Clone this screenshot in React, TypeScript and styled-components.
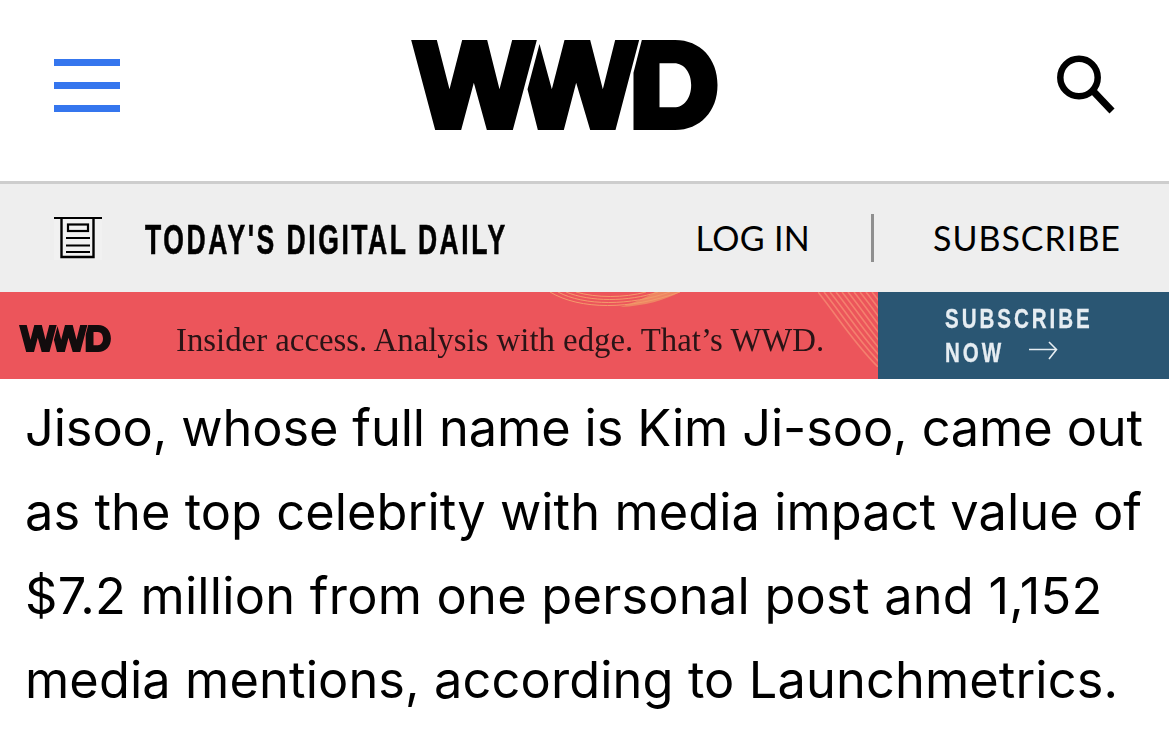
import React from 'react'
import styled, { createGlobalStyle } from 'styled-components'

const GlobalStyle = createGlobalStyle`
  html, body {
    margin: 0;
    padding: 0;
    background: #fff;
  }
  body {
    width: 1169px;
    height: 735px;
    overflow: hidden;
  }
`

interface LogoProps {
  width: number
  height: number
  color?: string
}

const WwdLogo: React.FC<LogoProps> = ({ width, height, color = '#000' }) => (
  <svg width={width} height={height} viewBox="33 30 920 270" fill={color} aria-label="WWD">
    <path d="M33 30H110L148 178L186 30H261L298 178L336 30H410L338 300H260L221 158L183 300H105Z" />
    <path d="M418 42L455 178L493 30H570L608 178L645 30H717L646 300H570L528 158L491 300H413L382 178Z" />
    <path
      fillRule="evenodd"
      d="M725 30H825C900 30 952 86 952 165C952 244 900 300 825 300H700V128ZM778 100V232H822C852 232 873 204 873 165C873 128 852 100 822 100Z"
    />
  </svg>
)

const hatchOffsets = [0, 6, 12, 18, 24, 30, 36, 42, 48, 54]

const App: React.FC = () => {
  return (
    <>
      <GlobalStyle />
      <Page>
        <Header>
          <MenuButton>
            <MenuLine />
            <MenuLine />
            <MenuLine />
          </MenuButton>
          <WwdLogo width={307} height={90} />
          <SearchButton>
            <svg width="60" height="60" viewBox="0 0 60 60" fill="none" stroke="#000">
              <circle cx="24" cy="22.5" r="18.7" strokeWidth="6.5" />
              <path d="M39 37L57 56" strokeWidth="7" />
            </svg>
          </SearchButton>
        </Header>

        <DailyBar>
          <DailyLink>
            <PaperIcon>
              <svg width="48" height="44" viewBox="0 0 48 44" fill="none" stroke="#000">
                <path d="M0 2H48" strokeWidth="2" />
                <path d="M7.5 2V41H39.5V2" strokeWidth="2.4" />
                <rect x="14" y="8.5" width="20" height="6.5" strokeWidth="2.2" />
                <path d="M12 22H36M12 29.5H36M12 36H36" strokeWidth="2.2" />
              </svg>
            </PaperIcon>
            <DailyTitle>TODAY'S DIGITAL DAILY</DailyTitle>
          </DailyLink>
          <AccountLinks>
            <LogIn>LOG IN</LogIn>
            <Divider />
            <Subscribe>SUBSCRIBE</Subscribe>
          </AccountLinks>
        </DailyBar>

        <Banner>
          <BannerAd>
            <WavesTop viewBox="0 0 130 20" fill="none" stroke="#f59a6c" strokeWidth="1">
              <path d="M0 0C30 18 80 18 130 0" />
              <path d="M8 0C34 14 80 14 120 0" />
              <path d="M16 0C40 10 78 10 108 0" />
              <path d="M26 0C46 6 74 6 96 0" />
              <path d="M70 15C95 14 115 8 130 0H105C95 6 85 10 70 15Z" fill="#f09a66" fillOpacity="0.7" stroke="none" />
            </WavesTop>
            <WavesRight viewBox="0 0 60 75" fill="none" stroke="#f4806e" strokeWidth="1.6">
              {hatchOffsets.map((o) => (
                <path key={o} d={`M${o} 0C${o + 20} 25 ${o + 35} 50 ${o + 60} 75`} />
              ))}
            </WavesRight>
            <BannerLogo>
              <WwdLogo width={92} height={27} color="#120c0d" />
            </BannerLogo>
            <BannerText>Insider access. Analysis with edge. That’s WWD.</BannerText>
          </BannerAd>
          <BannerCta>
            <CtaLine>
              <CtaText $width={146}>SUBSCRIBE</CtaText>
            </CtaLine>
            <CtaLine>
              <CtaText $width={55}>NOW</CtaText>
              <CtaArrow width="29" height="20" viewBox="0 0 29 20" fill="none" stroke="#e6edf2" strokeWidth="1.6">
                <path d="M0 8.5H27.5M20 1L27.5 8.5L20 18" />
              </CtaArrow>
            </CtaLine>
          </BannerCta>
        </Banner>

        <Article>
          <ArticleLine $tracking={-0.11}>Jisoo, whose full name is Kim Ji-soo, came out</ArticleLine>
          <ArticleLine $tracking={0.06}>as the top celebrity with media impact value of</ArticleLine>
          <ArticleLine $tracking={0.24}>$7.2 million from one personal post and 1,152</ArticleLine>
          <ArticleLine $tracking={0.12}>media mentions, according to Launchmetrics.</ArticleLine>
        </Article>
      </Page>
    </>
  )
}

const Page = styled.div`
  width: 1169px;
  height: 735px;
  overflow: hidden;
  background: #fff;
`

// header
const Header = styled.header`
  height: 184px;
  box-sizing: border-box;
  padding: 40px 54px 0;
  display: flex;
  align-items: flex-start;
  border-bottom: 3px solid #cdcdcd;
`

const MenuButton = styled.div`
  width: 66px;
  padding-top: 19px;
  display: flex;
  flex-direction: column;
  gap: 16px;
  margin-right: 291px;
`

const MenuLine = styled.span`
  display: block;
  height: 7px;
  background: #3576ee;
`

const SearchButton = styled.div`
  margin-left: auto;
  padding-top: 15px;
`

// digital daily bar
const DailyBar = styled.div`
  height: 108px;
  box-sizing: border-box;
  background: #eeeeee;
  padding: 0 48px 0 54px;
  display: flex;
  justify-content: space-between;
  align-items: center;
`

const DailyLink = styled.div`
  display: flex;
  align-items: center;
  gap: 43px;
`

const PaperIcon = styled.div`
  height: 44px;
  background: #f1f1f1;
  display: flex;
`

const DailyTitle = styled.div`
  width: 360px;
  font-family: 'Liberation Sans', Arial, sans-serif;
  font-weight: 700;
  font-size: 42px;
  letter-spacing: 4px;
  -webkit-text-stroke: 0.6px #000;
  color: #000;
  white-space: nowrap;
  transform-origin: left center;
  transform: scaleX(0.632);
  margin-top: 4px;
`

const AccountLinks = styled.div`
  display: flex;
  align-items: center;
  margin-top: -1px;
`

const LogIn = styled.div`
  font-family: Lato, sans-serif;
  font-size: 34px;
  letter-spacing: 0.3px;
  color: #000;
  white-space: nowrap;
`

const Divider = styled.div`
  width: 3px;
  height: 48px;
  background: #8f8f8f;
  margin: 0 59px 0 61px;
`

const Subscribe = styled(LogIn)`
  letter-spacing: 1px;
`

// banner
const Banner = styled.div`
  height: 87px;
  display: flex;
`

const BannerAd = styled.div`
  position: relative;
  width: 878px;
  background: #ec555b;
  display: flex;
  align-items: center;
  padding: 6px 0 0 19px;
  box-sizing: border-box;
  overflow: hidden;
`

const WavesTop = styled.svg`
  position: absolute;
  left: 550px;
  top: 0;
  width: 130px;
  height: 20px;
`

const WavesRight = styled.svg`
  position: absolute;
  right: 0;
  top: 0;
  width: 60px;
  height: 75px;
`

const BannerLogo = styled.div`
  position: relative;
  width: 157px;
  display: flex;
  filter: blur(0.5px);
`

const BannerText = styled.div`
  position: relative;
  margin-top: 3px;
  font-family: 'Liberation Serif', serif;
  font-size: 32.8px;
  color: #2a1416;
  white-space: nowrap;
  filter: blur(0.3px);
`

const BannerCta = styled.div`
  flex: 1;
  background: #2a5673;
  padding: 10px 0 0 67px;
  box-sizing: border-box;
`

const CtaLine = styled.div`
  height: 34px;
  display: flex;
  align-items: center;
`

const CtaText = styled.span<{ $width: number }>`
  width: ${(props) => props.$width}px;
  font-family: 'Liberation Sans', Arial, sans-serif;
  font-weight: 700;
  font-size: 28px;
  letter-spacing: 4px;
  -webkit-text-stroke: 0.3px #e6edf2;
  color: #e6edf2;
  white-space: nowrap;
  transform-origin: left center;
  transform: scaleX(0.735);
  filter: blur(0.3px);
`

const CtaArrow = styled.svg`
  margin-left: 29px;
  margin-top: -4px;
`

// article
const Article = styled.article`
  padding: 7px 0 0 25px;
  font-family: Inter, 'Noto Sans', sans-serif;
  font-size: 50.5px;
  line-height: 84px;
  color: #000;
`

const ArticleLine = styled.div<{ $tracking: number }>`
  white-space: nowrap;
  letter-spacing: ${(props) => props.$tracking}px;
`

export default App
